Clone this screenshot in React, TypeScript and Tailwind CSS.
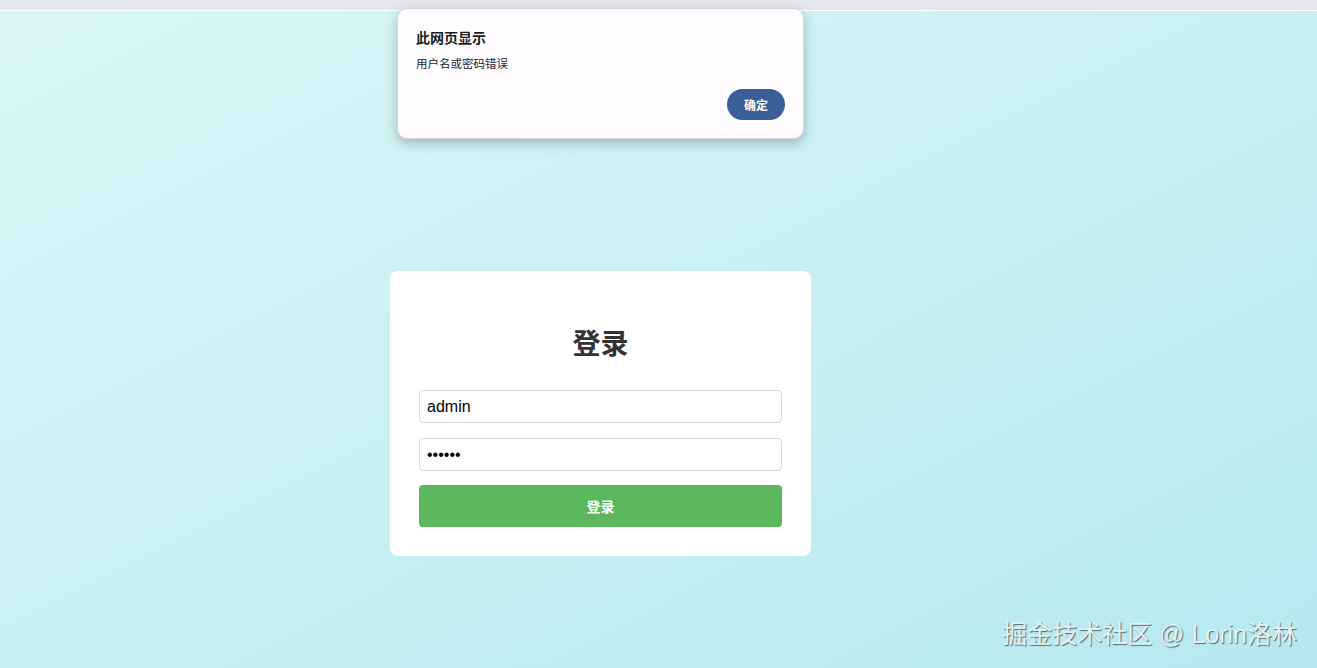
import React, { useState } from 'react'

const cjk = "font-['Noto_Sans_CJK_SC','Noto_Sans',sans-serif]"
const latin = "font-['Liberation_Sans','Noto_Sans_CJK_SC',sans-serif]"

function AlertDialog({ onClose }: { onClose: () => void }) {
  return (
    <div className={`absolute left-[397px] top-[8px] w-[407px] h-[131px] rounded-[10px] bg-[#fefcff] border border-[#d6d6dc] shadow-[0_4px_12px_rgba(0,0,0,0.25)] px-[18px] pt-[18px] ${cjk}`}>
      <div className="text-[14px] leading-[20px] font-semibold text-[#1c1c1e]">此网页显示</div>
      <div className="mt-[8px] text-[11.5px] leading-[16px] text-[#1c1c1e]">用户名或密码错误</div>
      <div className="flex justify-end mt-[18px]">
        <button onClick={onClose} className="w-[58px] h-[31px] rounded-full bg-[#3a5f98] text-white text-[12px] font-bold">确定</button>
      </div>
    </div>
  )
}

export default function App() {
  const [username, setUsername] = useState('admin')
  const [password, setPassword] = useState('123456')
  const [showAlert, setShowAlert] = useState(true)

  return (
    <div className="relative w-full h-[668px] overflow-hidden bg-gradient-to-br from-[#dbf6f8] via-[#c8f0f3] to-[#b4e9f0]">
      {/* browser chrome strip */}
      <div className="h-[11px] bg-[#e6e6ee] border-b border-white" />

      <div className="pl-[390px] pt-[260px]">
        <div className="w-[421px] h-[285px] bg-white rounded-[8px] px-[29px] pt-[52px]">
          <h2 className={`text-center text-[28px] leading-[38px] font-bold text-[#333] ${cjk}`}>登录</h2>
          <form onSubmit={e => { e.preventDefault(); setShowAlert(true) }} className="mt-[29px] flex flex-col">
            <input
              value={username}
              onChange={e => setUsername(e.target.value)}
              className={`h-[33px] px-[7px] rounded-[4px] border border-[#d9d9d9] text-[16px] text-black outline-none ${latin}`}
            />
            <input
              type="password"
              value={password}
              onChange={e => setPassword(e.target.value)}
              className={`mt-[15px] h-[33px] px-[7px] rounded-[4px] border border-[#d9d9d9] text-[16px] text-black outline-none ${latin}`}
            />
            <button type="submit" className={`mt-[14px] h-[42px] rounded-[4px] bg-[#5cb85c] text-white text-[14px] font-semibold ${cjk}`}>登录</button>
          </form>
        </div>
      </div>

      {showAlert && <AlertDialog onClose={() => setShowAlert(false)} />}

      <div className={`absolute right-[20px] top-[618px] text-[25px] leading-[32px] text-[#e4f2f4] [text-shadow:1px_1px_1px_rgba(0,0,0,0.55)] ${latin}`}>
        掘金技术社区 @ Lorin洛林
      </div>
    </div>
  )
}
